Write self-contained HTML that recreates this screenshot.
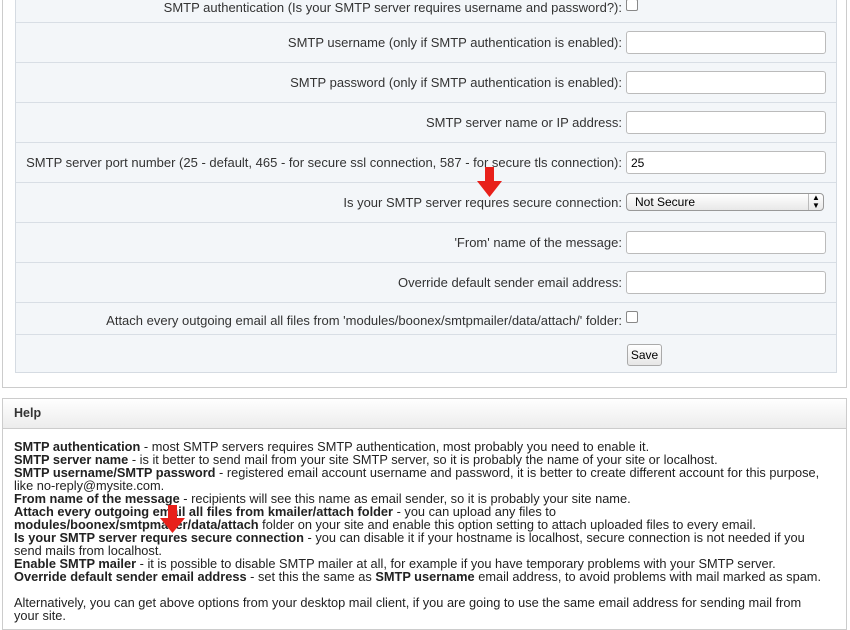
<!DOCTYPE html>
<html><head><style>
body{margin:0;width:850px;height:616px;overflow:hidden;background:#fff;font-family:"Liberation Sans",sans-serif;font-size:13px;color:#333;position:relative}
.outer{position:absolute;left:2px;top:-2px;width:843px;height:389px;border:1px solid #ccc;border-top:none;background:#fff}
.tbl{position:absolute;left:12px;top:0;width:820px;border:1px solid #d5dbe2;border-top:none;background:#f3f6f9}
.row{position:relative;border-bottom:1px solid #d8dee5;height:39px}
.row .l{position:absolute;right:214px;top:12px;white-space:nowrap;text-align:right}
.inp{position:absolute;left:610px;top:8px;width:200px;height:23px;border:1px solid #bbb;border-radius:3px;background:#fff;font-size:12px;line-height:23px;padding-left:4px;box-sizing:border-box;color:#000}
.chk{position:absolute;left:610px;width:10px;height:10px;border:1px solid #888;border-radius:2px;background:#fff}
.sel{position:absolute;left:610px;top:10px;width:198px;height:18px;border:1px solid #999;border-radius:4px;background:linear-gradient(#fff,#e8e8e8);box-sizing:border-box;padding-left:8px;line-height:16px;color:#000;font-size:12px}
.sel span{position:absolute;right:0;top:0;width:14px;height:16px;border-left:1px solid #bbb;font-size:8px;text-align:center;line-height:8px}
.btn{position:absolute;left:611px;top:9px;width:35px;height:22px;border:1px solid #aaa;border-radius:3px;background:linear-gradient(#fff,#e6e6e6);box-sizing:border-box;text-align:center;line-height:20px;color:#000;font-size:12px}
.help{position:absolute;left:2px;top:398px;width:843px;height:230px;border:1px solid #ccc;background:#fff}
.hh{height:29px;border-bottom:1px solid #ccc;background:linear-gradient(#fff,#ececec);font-weight:bold;line-height:28px;padding-left:11px;color:#333;font-size:12.5px}
.ht{position:absolute;left:11px;top:41px;line-height:13px;white-space:nowrap;color:#222;font-size:12.8px}
b{color:#222}
.arrow{position:absolute}
</style></head><body>
<div class="outer">
<div class="tbl">
<div class="row" style="height:24px"><div class="l" style="top:2px">SMTP authentication (Is your SMTP server requires username and password?):</div><div class="chk" style="top:1px"></div></div>
<div class="row"><div class="l">SMTP username (only if SMTP authentication is enabled):</div><div class="inp"></div></div>
<div class="row"><div class="l">SMTP password (only if SMTP authentication is enabled):</div><div class="inp"></div></div>
<div class="row"><div class="l">SMTP server name or IP address:</div><div class="inp"></div></div>
<div class="row"><div class="l">SMTP server port number (25 - default, 465 - for secure ssl connection, 587 - for secure tls connection):</div><div class="inp">25</div></div>
<div class="row"><div class="l">Is your SMTP server requres secure connection:</div><div class="sel">Not Secure<span>▲<br>▼</span></div></div>
<div class="row"><div class="l">'From' name of the message:</div><div class="inp"></div></div>
<div class="row"><div class="l">Override default sender email address:</div><div class="inp"></div></div>
<div class="row" style="height:31px"><div class="l" style="top:10px">Attach every outgoing email all files from 'modules/boonex/smtpmailer/data/attach/' folder:</div><div class="chk" style="top:8px"></div></div>
<div class="row" style="height:37px;border-bottom:none"><div class="btn">Save</div></div>
</div>
</div>
<div class="help">
<div class="hh">Help</div>
<div class="ht">
<b>SMTP authentication</b> - most SMTP servers requires SMTP authentication, most probably you need to enable it.<br>
<b>SMTP server name</b> - is it better to send mail from your site SMTP server, so it is probably the name of your site or localhost.<br>
<b>SMTP username/SMTP password</b> - registered email account username and password, it is better to create different account for this purpose,<br>
like no-reply@mysite.com.<br>
<b>From name of the message</b> - recipients will see this name as email sender, so it is probably your site name.<br>
<b>Attach every outgoing email all files from kmailer/attach folder</b> - you can upload any files to<br>
<b>modules/boonex/smtpmailer/data/attach</b> folder on your site and enable this option setting to attach uploaded files to every email.<br>
<b>Is your SMTP server requres secure connection</b> - you can disable it if your hostname is localhost, secure connection is not needed if you<br>
send mails from localhost.<br>
<b>Enable SMTP mailer</b> - it is possible to disable SMTP mailer at all, for example if you have temporary problems with your SMTP server.<br>
<b>Override default sender email address</b> - set this the same as <b>SMTP username</b> email address, to avoid problems with mail marked as spam.<br>
<br>
Alternatively, you can get above options from your desktop mail client, if you are going to use the same email address for sending mail from<br>
your site.
</div>
</div>
<svg class="arrow" style="left:477px;top:167px" width="26" height="31"><polygon points="8,0 17,0 17,14 25,14 12.5,30 0,14 8,14" fill="#e8201a"/></svg>
<svg class="arrow" style="left:160px;top:505px" width="26" height="29"><polygon points="8,0 17,0 17,13 25,13 12.5,28 0,13 8,13" fill="#e8201a"/></svg>
</body></html>
